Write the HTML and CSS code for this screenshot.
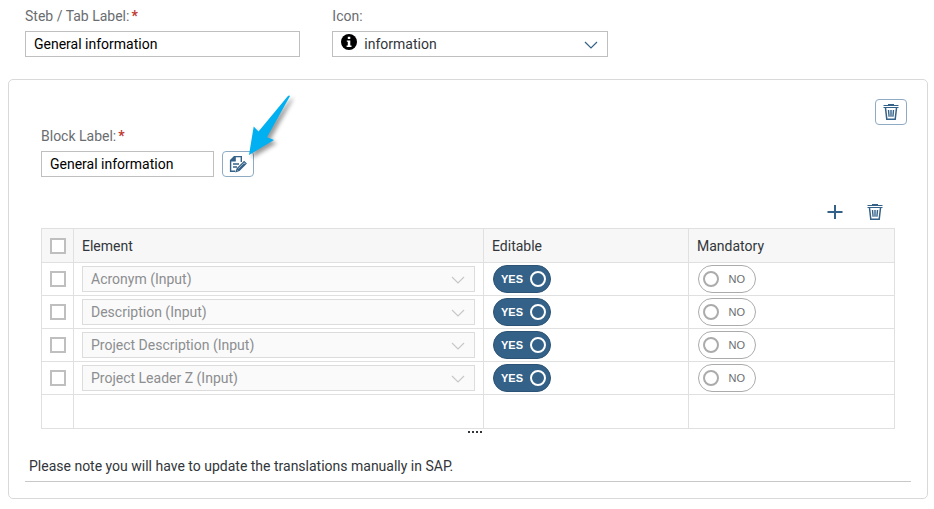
FILE: index.html
```html
<!DOCTYPE html>
<html lang="en">
<head>
<meta charset="utf-8">
<meta name="viewport" content="width=device-width, initial-scale=1">
<title>Form layout editor</title>
<link rel="stylesheet" href="styles.css">
</head>
<body>
<svg class="sprite" aria-hidden="true">
  <symbol id="trash" viewBox="0 0 16 16">
    <path d="M.5 1.500h15M5 .5h6" fill="none" stroke="currentColor" stroke-width="1"/>
    <path d="M.5 3.500h15" fill="none" stroke="currentColor"/>
    <path d="M2.500 4l1.300 11.300h8.400L13.500 4" fill="none" stroke="currentColor" stroke-width="1.500"/>
    <path d="M5.500 6l.6 6.800M8 6v6.800M10.500 6l-.6 6.800" fill="none" stroke="currentColor" stroke-width="1.400"/>
  </symbol>
  <symbol id="chevron" viewBox="0 0 14 8">
    <path d="M1 1l6 6 6-6" fill="none" stroke="currentColor" stroke-width="1.200"/>
  </symbol>
</svg>

<main>
  <form class="tab-form">
    <div class="field">
      <label class="required" for="tab-label">Steb / Tab Label:</label>
      <input class="control" id="tab-label" type="text" value="General information" required>
    </div>
    <div class="field">
      <label for="tab-icon">Icon:</label>
      <div class="select with-icon">
        <svg class="info" viewBox="0 0 16 16" aria-hidden="true">
          <circle cx="8" cy="8" r="8" fill="#000"/>
          <path d="M6.800 2.800h2.500v2.300H6.800zM5.800 6.400h3.500v5.200h1.200v1.300H5.600v-1.300h1.200V7.700h-1z" fill="#fff"/>
        </svg>
        <select class="control" id="tab-icon"><option>information</option></select>
        <svg class="chevron" aria-hidden="true"><use href="#chevron"/></svg>
      </div>
    </div>
  </form>

  <section class="panel">
    <div class="panel-actions">
      <button class="outlined" type="button" aria-label="Delete block"><svg class="icon"><use href="#trash"/></svg></button>
    </div>

    <div class="block">
      <div class="field">
        <label class="required" for="block-label">Block Label:</label>
        <div class="block-row">
          <input class="control block-input" id="block-label" type="text" value="General information" required>
          <div class="edit">
            <button class="outlined" type="button" aria-label="Edit translations">
              <svg class="edit-icon" viewBox="0 0 18 18">
                <path d="M12.300 7V1.600H5.500L1.600 5.500v10.700h4.600" fill="none" stroke="currentColor" stroke-width="1.400"/>
                <path d="M1 6.500V5.200L5.200 1h1.600v5.500z" fill="currentColor"/>
                <path d="M4 9h6M4 12h4" stroke="currentColor" stroke-width="1.300"/>
                <path d="M7.200 16.500l1-3 6.900-6.900 2 2-6.900 6.900zM8.200 13.500l2 2M9.500 14.500l6-6" fill="none" stroke="currentColor" stroke-width="1.200"/>
              </svg>
            </button>
            <svg class="pointer" viewBox="0 0 50 68" aria-hidden="true">
              <path d="M43 1 20 42.300 27 45 2 60 6.700 31.500 11.500 36.500 40.500 1.500Q42 0 43 1z" fill="#00b0f0"/>
            </svg>
          </div>
        </div>
      </div>

      <div class="toolbar">
        <button class="plain" type="button" aria-label="Add element"><svg class="icon" viewBox="0 0 16 16"><path d="M8 1v14M.5 8h15" stroke="currentColor" stroke-width="2"/></svg></button>
        <button class="plain" type="button" aria-label="Delete element"><svg class="icon"><use href="#trash"/></svg></button>
      </div>

      <table>
        <colgroup><col class="col-check"><col><col class="col-editable"><col class="col-mandatory"></colgroup>
        <thead>
          <tr><th class="check"><input type="checkbox" aria-label="Select all"></th><th>Element</th><th>Editable</th><th>Mandatory</th></tr>
        </thead>
        <tbody>
          <tr>
            <td class="check"><input type="checkbox" aria-label="Select Acronym"></td>
            <td><div class="select"><select class="control" aria-label="Element" disabled><option>Acronym (Input)</option></select><svg class="chevron" aria-hidden="true"><use href="#chevron"/></svg></div></td>
            <td><label class="switch on">YES<input type="checkbox" role="switch" checked></label></td>
            <td><label class="switch"><input type="checkbox" role="switch">NO</label></td>
          </tr>
          <tr>
            <td class="check"><input type="checkbox" aria-label="Select Description"></td>
            <td><div class="select"><select class="control" aria-label="Element" disabled><option>Description (Input)</option></select><svg class="chevron" aria-hidden="true"><use href="#chevron"/></svg></div></td>
            <td><label class="switch on">YES<input type="checkbox" role="switch" checked></label></td>
            <td><label class="switch"><input type="checkbox" role="switch">NO</label></td>
          </tr>
          <tr>
            <td class="check"><input type="checkbox" aria-label="Select Project Description"></td>
            <td><div class="select"><select class="control" aria-label="Element" disabled><option>Project Description (Input)</option></select><svg class="chevron" aria-hidden="true"><use href="#chevron"/></svg></div></td>
            <td><label class="switch on">YES<input type="checkbox" role="switch" checked></label></td>
            <td><label class="switch"><input type="checkbox" role="switch">NO</label></td>
          </tr>
          <tr>
            <td class="check"><input type="checkbox" aria-label="Select Project Leader Z"></td>
            <td><div class="select"><select class="control" aria-label="Element" disabled><option>Project Leader Z (Input)</option></select><svg class="chevron" aria-hidden="true"><use href="#chevron"/></svg></div></td>
            <td><label class="switch on">YES<input type="checkbox" role="switch" checked></label></td>
            <td><label class="switch"><input type="checkbox" role="switch">NO</label></td>
          </tr>
          <tr class="empty"><td></td><td></td><td></td><td></td></tr>
        </tbody>
      </table>
      <div class="grip" aria-hidden="true"><i></i><i></i><i></i><i></i></div>
    </div>

    <p class="note">Please note you will have to update the translations manually in SAP.</p>
  </section>
</main>
</body>
</html>
```
FILE: styles.css
```css
* { box-sizing: border-box; }

body {
  margin: 0;
  background: #fff;
  color: #32363a;
  font: 14px/18px Roboto, "Noto Sans", sans-serif;
}

main { padding: 7px 6px 8px 8px; }

.sprite { display: none; }

.tab-form {
  display: grid;
  grid-template-columns: repeat(3, 1fr);
  gap: 32px;
  padding: 0 13px 0 17px;
}

.field { display: flex; flex-direction: column; gap: 6px; }
.field label { color: #6a6d70; }
.required::after { content: "*"; color: #c0392f; font-weight: 700; margin-left: 2px; }

.control {
  width: 100%;
  height: 26px;
  padding: 0 8px;
  border: 1px solid #bfbfbf;
  border-radius: 0;
  background: #fff;
  color: #000;
  font: inherit;
  appearance: none;
}
.control:disabled { border-color: #dcdcdc; background: #fafafa; color: #8c8e90; opacity: 1; }

.select { position: relative; display: flex; color: #346187; }
.select .chevron { position: absolute; right: 10px; top: 10px; width: 14px; height: 8px; pointer-events: none; }
.select .control:disabled + .chevron { color: #c8c8c8; }
.with-icon .control { padding-left: 31px; color: #32363a; }
.info { position: absolute; left: 9px; top: 3px; width: 16px; height: 16px; }

.panel {
  margin-top: 22px;
  padding: 19px 16px 16px;
  border: 1px solid #d9d9d9;
  border-radius: 5px;
}
.panel-actions { display: flex; justify-content: flex-end; padding-right: 4px; }

button {
  display: flex;
  align-items: center;
  justify-content: center;
  width: 32px;
  height: 26px;
  padding: 0;
  border: 0;
  background: none;
  color: #346187;
}
.outlined { border: 1px solid #8fabc4; border-radius: 4px; background: #fff; }
.icon { width: 16px; height: 16px; }
.edit-icon { width: 18px; height: 18px; }

.block { padding: 2px 16px 0; }
.block-row { display: flex; gap: 8px; }
.block-input { width: 173px; }
.edit { position: relative; }
.pointer {
  position: absolute;
  left: 25px;
  bottom: 14px;
  width: 50px;
  height: 68px;
  filter: drop-shadow(3px 3px 2px rgba(0, 0, 0, .4));
}

.toolbar { display: flex; justify-content: flex-end; gap: 8px; padding: 22px 4px 3px; }

table { width: 100%; border-collapse: collapse; table-layout: fixed; }
.col-check { width: 32px; }
.col-editable { width: 205px; }
.col-mandatory { width: 206px; }
th, td { height: 33px; padding: 0 8px; border: 1px solid #e0e0e0; text-align: left; font-weight: 400; }
th { height: 34px; background: #f7f7f7; }
.empty td { height: 34px; }
.check { padding: 0; }
.check input {
  display: block;
  width: 16px;
  height: 16px;
  margin: 0 auto;
  border: 2px solid #bfbfbf;
  background: #fff;
  appearance: none;
}

.switch {
  display: flex;
  align-items: center;
  justify-content: space-between;
  width: 58px;
  height: 28px;
  margin-left: 1px;
  padding: 0 10px 0 4px;
  border: 1px solid #ababab;
  border-radius: 14px;
  color: #6a6d70;
  font-family: "Liberation Sans", Arial, sans-serif;
  font-size: 11px;
}
.switch.on { padding: 0 4px 0 7px; border-color: #2c5375; background: #346187; color: #fff; font-weight: 700; }
.switch input { width: 16px; height: 16px; margin: 0; border: 2px solid #ababab; border-radius: 50%; appearance: none; }
.switch.on input { border-color: #fff; }

.grip { display: flex; justify-content: center; gap: 2px; padding: 2px 0 0 14px; }
.grip i { width: 2px; height: 2px; background: #32363a; }

.note { margin: 24px 0 0; padding: 0 4px 6px; border-bottom: 1px solid #c8c8c8; }
```
